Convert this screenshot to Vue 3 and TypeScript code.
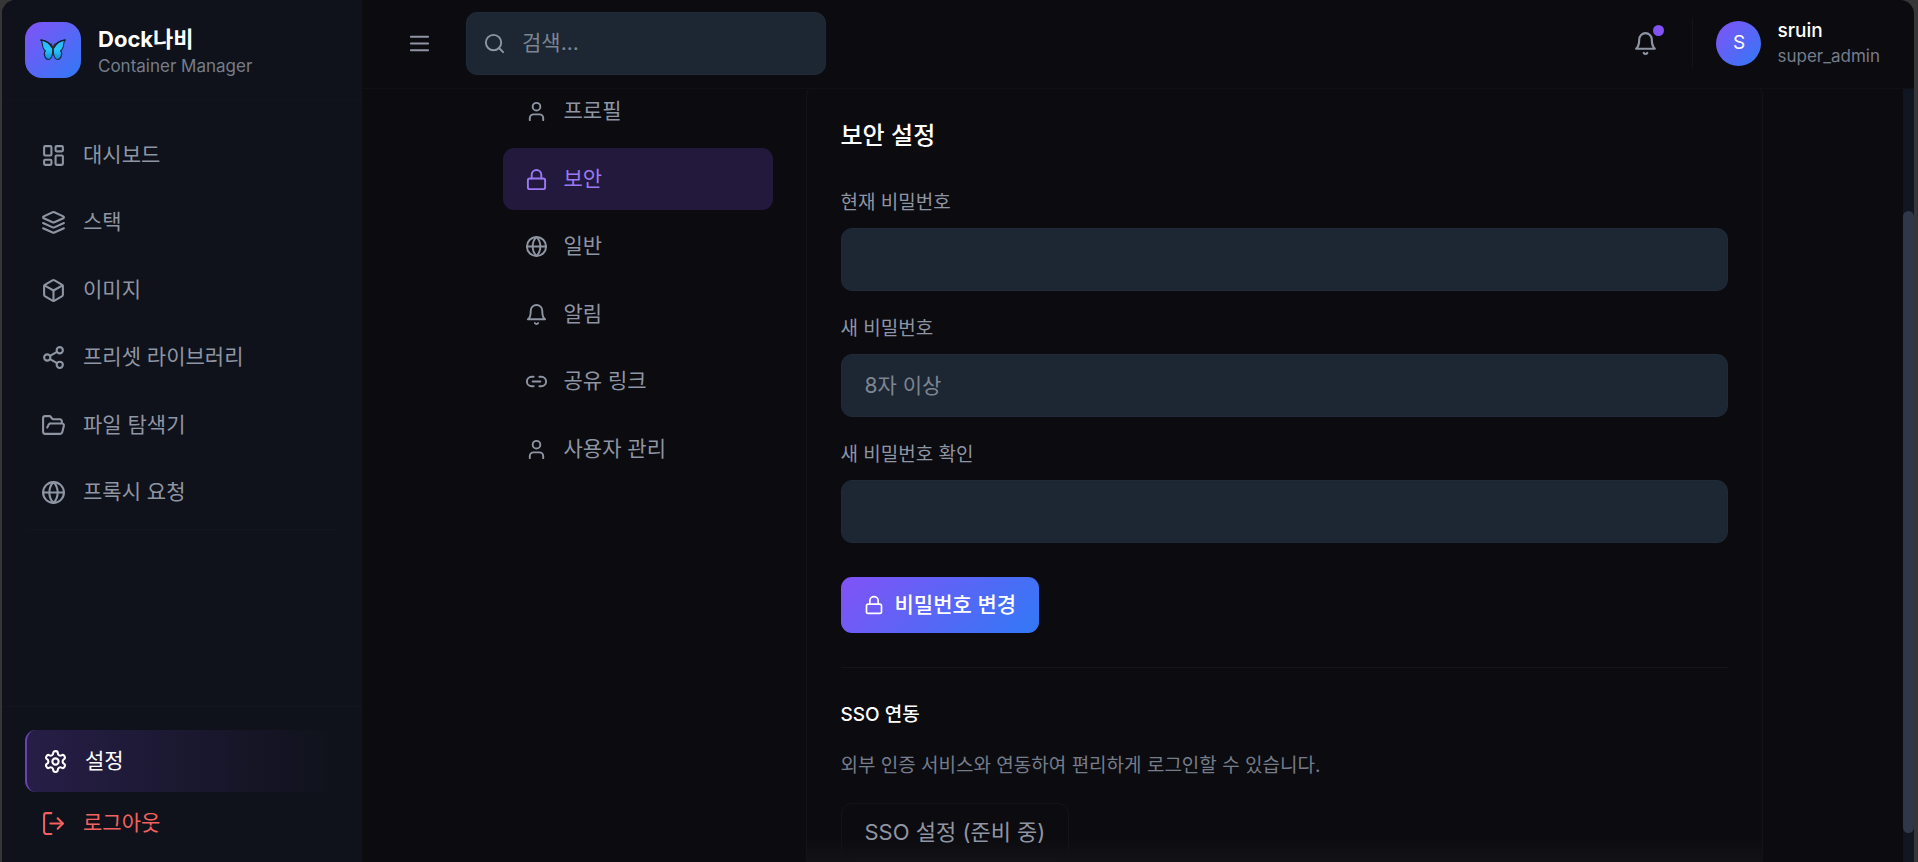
<script setup lang="ts">
import { ref } from 'vue'

interface Shape { t: 'path' | 'circle' | 'rect'; a: Record<string, string | number> }
interface Item { id: string; label: string; icon: string }

const p = (d: string): Shape => ({ t: 'path', a: { d } })
const c = (cx: number, cy: number, r: number): Shape => ({ t: 'circle', a: { cx, cy, r } })
const r = (x: number, y: number, width: number, height: number, rx: number): Shape => ({
  t: 'rect', a: { x, y, width, height, rx },
})

const icons: Record<string, Shape[]> = {
  dashboard: [r(3, 3, 7, 9, 1), r(14, 3, 7, 5, 1), r(14, 12, 7, 9, 1), r(3, 16, 7, 5, 1)],
  layers: [
    p('m12.83 2.18a2 2 0 0 0-1.66 0L2.6 6.08a1 1 0 0 0 0 1.83l8.58 3.91a2 2 0 0 0 1.66 0l8.58-3.9a1 1 0 0 0 0-1.83Z'),
    p('m22 12.5-9.17 4.16a2 2 0 0 1-1.66 0L2 12.5'),
    p('m22 17.5-9.17 4.16a2 2 0 0 1-1.66 0L2 17.5'),
  ],
  box: [
    p('M21 8a2 2 0 0 0-1-1.73l-7-4a2 2 0 0 0-2 0l-7 4A2 2 0 0 0 3 8v8a2 2 0 0 0 1 1.73l7 4a2 2 0 0 0 2 0l7-4A2 2 0 0 0 21 16Z'),
    p('m3.3 7 8.7 5 8.7-5'),
    p('M12 22V12'),
  ],
  share: [c(18, 5, 3), c(6, 12, 3), c(18, 19, 3), p('m8.59 13.51 6.83 3.98'), p('m15.41 6.51-6.82 3.98')],
  folder: [
    p('m6 14 1.45-2.9A2 2 0 0 1 9.24 10H20a2 2 0 0 1 1.94 2.5l-1.55 6a2 2 0 0 1-1.94 1.5H4a2 2 0 0 1-2-2V5a2 2 0 0 1 2-2h3.93a2 2 0 0 1 1.66.9l.82 1.2a2 2 0 0 0 1.66.9H18a2 2 0 0 1 2 2v2'),
  ],
  globe: [c(12, 12, 10), p('M12 2a14.5 14.5 0 0 0 0 20 14.5 14.5 0 0 0 0-20'), p('M2 12h20')],
  settings: [
    p('M12.22 2h-.44a2 2 0 0 0-2 2v.18a2 2 0 0 1-1 1.73l-.43.25a2 2 0 0 1-2 0l-.15-.08a2 2 0 0 0-2.73.73l-.22.38a2 2 0 0 0 .73 2.73l.15.1a2 2 0 0 1 1 1.72v.51a2 2 0 0 1-1 1.74l-.15.09a2 2 0 0 0-.73 2.73l.22.38a2 2 0 0 0 2.73.73l.15-.08a2 2 0 0 1 2 0l.43.25a2 2 0 0 1 1 1.73V20a2 2 0 0 0 2 2h.44a2 2 0 0 0 2-2v-.18a2 2 0 0 1 1-1.73l.43-.25a2 2 0 0 1 2 0l.15.08a2 2 0 0 0 2.73-.73l.22-.39a2 2 0 0 0-.73-2.73l-.15-.08a2 2 0 0 1-1-1.74v-.5a2 2 0 0 1 1-1.74l.15-.09a2 2 0 0 0 .73-2.73l-.22-.38a2 2 0 0 0-2.73-.73l-.15.08a2 2 0 0 1-2 0l-.43-.25a2 2 0 0 1-1-1.73V4a2 2 0 0 0-2-2z'),
    c(12, 12, 3),
  ],
  logout: [p('M10 2H5a2 2 0 0 0-2 2v16a2 2 0 0 0 2 2h5'), p('m16 17 5-5-5-5'), p('M21 12H9')],
  menu: [p('M3 5h18'), p('M3 12h18'), p('M3 19h18')],
  search: [c(11, 11, 8), p('m21 21-4.3-4.3')],
  bell: [
    p('M6 8a6 6 0 0 1 12 0c0 7 3 9 3 9H3s3-2 3-9'),
    p('M10.3 21a1.94 1.94 0 0 0 3.4 0'),
  ],
  user: [p('M19 21v-2a4 4 0 0 0-4-4H9a4 4 0 0 0-4 4v2'), c(12, 7, 4)],
  lock: [r(3, 11, 18, 11, 2), p('M7 11V7a5 5 0 0 1 10 0v4')],
  link: [p('M9 17H7A5 5 0 0 1 7 7h2'), p('M15 7h2a5 5 0 1 1 0 10h-2'), p('M8 12h8')],
}

const mainMenu: Item[] = [
  { id: 'dashboard', label: '대시보드', icon: 'dashboard' },
  { id: 'stacks', label: '스택', icon: 'layers' },
  { id: 'images', label: '이미지', icon: 'box' },
  { id: 'presets', label: '프리셋 라이브러리', icon: 'share' },
  { id: 'files', label: '파일 탐색기', icon: 'folder' },
  { id: 'proxy', label: '프록시 요청', icon: 'globe' },
]

const tabs: Item[] = [
  { id: 'profile', label: '프로필', icon: 'user' },
  { id: 'security', label: '보안', icon: 'lock' },
  { id: 'general', label: '일반', icon: 'globe' },
  { id: 'alerts', label: '알림', icon: 'bell' },
  { id: 'links', label: '공유 링크', icon: 'link' },
  { id: 'users', label: '사용자 관리', icon: 'user' },
]

const activeTab = ref('security')
const query = ref('')
const fields = ref([
  { id: 'current', label: '현재 비밀번호', hint: '', value: '' },
  { id: 'next', label: '새 비밀번호', hint: '8자 이상', value: '' },
  { id: 'confirm', label: '새 비밀번호 확인', hint: '', value: '' },
])
</script>

<template>
  <div class="desktop">
    <div class="window">
      <aside class="sidebar">
        <div class="brand">
          <div class="logo">
            <svg viewBox="0 0 26 22" aria-hidden="true">
              <defs>
                <linearGradient id="wing" x1="0" y1="0" x2="0" y2="1">
                  <stop offset="0" stop-color="#2fb4f5" />
                  <stop offset="0.5" stop-color="#27c5ff" />
                  <stop offset="1" stop-color="#1689dc" />
                </linearGradient>
              </defs>
              <g fill="url(#wing)" stroke="#14283f" stroke-width="1.1" stroke-linejoin="round">
                <path d="M12.8 9.5C10.5 4.5 6.5 1.6 1 1c.9 1.300 1.200 2.700 1.400 4.500.3 2.600 1 5.200 3 6.200-1.300 1.600-1.300 3.800-.6 5.600.7 2 2 3.300 3.800 3.200 2.400-.2 3.800-4.500 4.200-8z" />
                <path d="M13.2 9.5C15.5 4.5 19.5 1.6 25 1c-.9 1.300-1.200 2.700-1.400 4.500-.3 2.600-1 5.200-3 6.200 1.300 1.600 1.300 3.800.6 5.600-.7 2-2 3.300-3.800 3.200-2.400-.2-3.800-4.500-4.200-8z" />
              </g>
              <path d="M1 1c5 .6 9 3.200 11.500 8M25 1c-5 .6-9 3.200-11.500 8" fill="none" stroke="#14202e" stroke-width="1.6" stroke-linecap="round" />
              <path d="M13 8v8M13 9l-2-4M13 9l2-4" fill="none" stroke="#3a2a20" stroke-width="1.4" stroke-linecap="round" />
            </svg>
          </div>
          <div class="brand-text">
            <strong>Dock나비</strong>
            <span>Container Manager</span>
          </div>
        </div>
        <nav class="menu">
          <a v-for="item in mainMenu" :key="item.id" :href="'#' + item.id" class="item">
            <svg class="icon" viewBox="0 0 24 24" aria-hidden="true">
              <component :is="s.t" v-for="(s, i) in icons[item.icon]" :key="i" v-bind="s.a" />
            </svg>
            {{ item.label }}
          </a>
          <hr />
        </nav>
        <div class="bottom">
          <a href="#settings" class="item current">
            <svg class="icon" viewBox="0 0 24 24" aria-hidden="true">
              <component :is="s.t" v-for="(s, i) in icons.settings" :key="i" v-bind="s.a" />
            </svg>
            설정
          </a>
          <button type="button" class="item logout">
            <svg class="icon" viewBox="0 0 24 24" aria-hidden="true">
              <component :is="s.t" v-for="(s, i) in icons.logout" :key="i" v-bind="s.a" />
            </svg>
            로그아웃
          </button>
        </div>
      </aside>

      <div class="main">
        <header class="topbar">
          <button type="button" class="bare" aria-label="메뉴">
            <svg class="icon small" viewBox="0 0 24 24" aria-hidden="true">
              <component :is="s.t" v-for="(s, i) in icons.menu" :key="i" v-bind="s.a" />
            </svg>
          </button>
          <label class="search">
            <svg class="icon small" viewBox="0 0 24 24" aria-hidden="true">
              <component :is="s.t" v-for="(s, i) in icons.search" :key="i" v-bind="s.a" />
            </svg>
            <input v-model="query" type="text" placeholder="검색..." aria-label="검색" />
          </label>
          <div class="account">
            <button type="button" class="bare notify" aria-label="알림">
              <svg class="icon" viewBox="0 0 24 24" aria-hidden="true">
                <component :is="s.t" v-for="(s, i) in icons.bell" :key="i" v-bind="s.a" />
              </svg>
              <span class="dot"></span>
            </button>
            <div class="profile">
              <div class="avatar">S</div>
              <div class="who">
                <strong>sruin</strong>
                <span>super_admin</span>
              </div>
            </div>
          </div>
        </header>

        <div class="body">
          <main class="content">
            <nav class="tabs">
              <button
                v-for="tab in tabs"
                :key="tab.id"
                type="button"
                class="tab"
                :class="{ active: tab.id === activeTab }"
                @click="activeTab = tab.id"
              >
                <svg class="icon small" viewBox="0 0 24 24" aria-hidden="true">
                  <component :is="s.t" v-for="(s, i) in icons[tab.icon]" :key="i" v-bind="s.a" />
                </svg>
                {{ tab.label }}
              </button>
            </nav>
            <section class="panel">
              <h2>보안 설정</h2>
              <form @submit.prevent>
                <div v-for="f in fields" :key="f.id" class="field">
                  <label :for="f.id">{{ f.label }}</label>
                  <input :id="f.id" v-model="f.value" type="password" :placeholder="f.hint" />
                </div>
                <button type="submit" class="primary">
                  <svg class="icon tiny" viewBox="0 0 24 24" aria-hidden="true">
                    <component :is="s.t" v-for="(s, i) in icons.lock" :key="i" v-bind="s.a" />
                  </svg>
                  비밀번호 변경
                </button>
              </form>
              <div class="sso">
                <h3>SSO 연동</h3>
                <p>외부 인증 서비스와 연동하여 편리하게 로그인할 수 있습니다.</p>
                <button type="button" class="outline">SSO 설정 (준비 중)</button>
              </div>
            </section>
          </main>
          <div class="scrollbar"><div class="thumb"></div></div>
        </div>
      </div>
    </div>
  </div>
</template>

<style>
html,
body {
  margin: 0;
  background: #333333;
}
</style>

<style scoped>
* {
  box-sizing: border-box;
}
.desktop {
  height: 100vh;
  padding: 0 4px 0 2px;
  background: #363636;
  color: #8e95a3;
  font-family: Inter, 'Noto Sans CJK KR', sans-serif;
  font-size: 21px;
  line-height: 32px;
  overflow: hidden;
}
.window {
  display: flex;
  height: 100%;
  border-radius: 14px 14px 0 0;
  background: #0c0b10;
  overflow: hidden;
}
button,
input {
  font: inherit;
  color: inherit;
}
button {
  cursor: pointer;
}
.icon {
  flex: none;
  width: 25px;
  height: 25px;
  fill: none;
  stroke: currentColor;
  stroke-width: 2;
  stroke-linecap: round;
  stroke-linejoin: round;
}
.icon.small {
  width: 23px;
  height: 23px;
}
.icon.tiny {
  width: 20px;
  height: 20px;
}

.sidebar {
  display: flex;
  flex: none;
  flex-direction: column;
  width: 360px;
  background: #0f121a;
  border-right: 1px solid #11141c;
}
.brand {
  display: flex;
  align-items: center;
  gap: 17px;
  height: 101px;
  padding: 0 23px;
  border-bottom: 1px solid #11141c;
}
.logo {
  display: grid;
  place-items: center;
  width: 56px;
  height: 56px;
  border-radius: 17px;
  background: linear-gradient(135deg, #8252f6, #3179f6);
}
.logo svg {
  width: 26px;
  height: 22px;
}
.brand-text {
  display: flex;
  flex-direction: column;
  padding-top: 2px;
}
.brand-text strong {
  color: #ffffff;
  font-size: 22px;
  font-weight: 700;
  line-height: 30px;
}
.brand-text span {
  color: #757d8b;
  font-size: 17px;
  line-height: 24px;
}
.menu {
  flex: 1;
  padding: 23px;
}
.item {
  display: flex;
  align-items: center;
  gap: 17px;
  height: 62px;
  padding: 0 16px;
  border: 0;
  border-radius: 11px;
  color: #8e95a3;
  text-decoration: none;
}
.menu .item {
  margin-bottom: 6px;
}
.menu .item:nth-of-type(odd) {
  margin-bottom: 5px;
}
.menu hr {
  margin: 6px 0 0;
  border: 0;
  border-top: 1px solid #12151d;
}
.bottom {
  padding: 23px 23px 8px;
  border-top: 1px solid #12151d;
}
.item.current {
  border-left: 2px solid #6743b0;
  background: linear-gradient(90deg, #271e47, #0f121a);
  color: #ffffff;
}
.item.logout {
  width: 100%;
  background: none;
  color: #f3615f;
}

.main {
  display: flex;
  flex: 1;
  flex-direction: column;
  min-width: 0;
}
.topbar {
  display: flex;
  flex: none;
  align-items: center;
  height: 89px;
  padding: 0 34px 2px 46px;
  border-bottom: 1px solid #111115;
}
.bare {
  display: grid;
  padding: 0;
  border: 0;
  background: none;
  color: #8e95a3;
}
.search {
  display: flex;
  align-items: center;
  gap: 16px;
  width: 360px;
  height: 63px;
  margin-left: 35px;
  padding: 0 16px;
  border: 1px solid #212b38;
  border-radius: 11px;
  background: #1d2633;
}
.search input {
  flex: 1;
  min-width: 0;
  padding: 0;
  border: 0;
  outline: 0;
  background: none;
}
input::placeholder {
  color: #7d8592;
  opacity: 1;
}
.account {
  display: flex;
  align-items: center;
  gap: 34px;
  margin-left: auto;
}
.notify {
  position: relative;
}
.dot {
  position: absolute;
  top: -6px;
  right: -6px;
  width: 11px;
  height: 11px;
  border-radius: 50%;
  background: #8252f6;
}
.profile {
  display: flex;
  align-items: center;
  gap: 16px;
  height: 50px;
  padding-left: 23px;
  border-left: 1px solid #141418;
}
.avatar {
  display: grid;
  place-items: center;
  width: 45px;
  height: 45px;
  border-radius: 50%;
  background: linear-gradient(135deg, #8252f6, #3179f6);
  color: #ffffff;
  font-size: 19px;
}
.who {
  display: flex;
  flex-direction: column;
}
.who strong {
  color: #ffffff;
  font-size: 19px;
  font-weight: 500;
  line-height: 26px;
}
.who span {
  color: #757d8b;
  font-size: 17px;
  line-height: 24px;
}

.body {
  display: flex;
  flex: 1;
  min-height: 0;
}
.content {
  display: flex;
  flex: 1;
  align-items: flex-start;
  justify-content: center;
  gap: 33px;
  overflow: hidden;
}
.tabs {
  flex: none;
  width: 270px;
  margin-top: -9px;
}
.tab {
  display: flex;
  align-items: center;
  gap: 16px;
  width: 100%;
  height: 62px;
  margin-bottom: 6px;
  padding: 0 22px;
  border: 0;
  border-radius: 11px;
  background: none;
  text-align: left;
}
.tab:nth-child(even) {
  margin-bottom: 5px;
}
.tab.active {
  background: #22193c;
  color: #9a78f4;
}
.panel {
  width: 957px;
  margin-top: -9px;
  padding: 35px 34px;
  border: 1px solid #141418;
  border-radius: 17px;
  background: linear-gradient(transparent calc(100% - 58px), #1c1c20);
}
h2 {
  margin: 0 0 32px;
  color: #ffffff;
  font-size: 24px;
  font-weight: 500;
  line-height: 40px;
}
.field label {
  display: block;
  margin-bottom: 10px;
  font-size: 19px;
  line-height: 30px;
}
.field input {
  display: block;
  width: 100%;
  height: 63px;
  margin-bottom: 23px;
  padding: 0 23px;
  border: 1px solid #202a38;
  border-radius: 11px;
  outline: 0;
  background: #1d2633;
}
.primary {
  display: flex;
  align-items: center;
  gap: 11px;
  height: 56px;
  margin-top: 34px;
  padding: 0 23px;
  border: 0;
  border-radius: 11px;
  background: linear-gradient(135deg, #8252f6, #3179f6);
  color: #ffffff;
  font-weight: 500;
}
.sso {
  margin-top: 34px;
  padding-top: 32px;
  border-top: 1px solid #16161a;
}
h3 {
  margin: 0 0 21px;
  color: #ffffff;
  font-size: 19px;
  font-weight: 500;
  line-height: 30px;
}
.sso p {
  margin: 0 0 22px;
  color: #757d8b;
  font-size: 19px;
  line-height: 30px;
}
.outline {
  height: 58px;
  padding: 0 23px;
  border: 1px solid #141418;
  border-radius: 11px;
  background: none;
  font-size: 22px;
}
.scrollbar {
  flex: none;
  width: 11px;
  padding-top: 122px;
  background: #101622;
}
.thumb {
  height: 622px;
  border-radius: 6px;
  background: #2e3848;
}
</style>
